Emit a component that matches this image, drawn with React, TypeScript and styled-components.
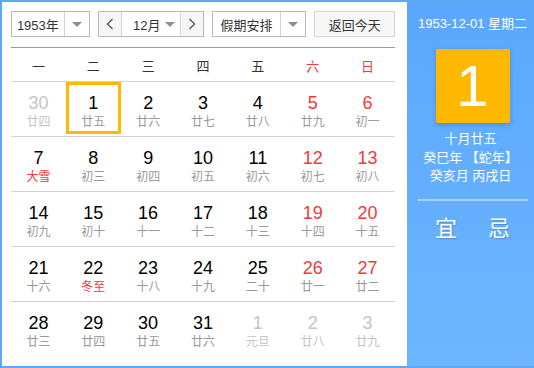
import React from 'react'
import styled, { createGlobalStyle } from 'styled-components'

const GlobalStyle = createGlobalStyle`
  body {
    margin: 0;
    background: #fff;
    font-family: "Liberation Sans", "Noto Sans CJK SC", sans-serif;
  }
`

const CalendarStyled = styled.div`
  display: flex;
  width: 534px;
  height: 368px;
  box-sizing: border-box;
  border: 2px solid #5fa8f6;
  border-right: none;
  background: #fff;
`

const MainStyled = styled.div`
  width: 384px;
  padding: 9px 12px 0 9px;
`

const ToolbarStyled = styled.div`
  display: flex;
  align-items: center;
  height: 26px;
  padding-bottom: 10px;
  border-bottom: 1px solid #5fa8f6;
`

const SelectStyled = styled.div<{ $width: number }>`
  display: flex;
  width: ${p => p.$width}px;
  height: 26px;
  box-sizing: border-box;
  border: 1px solid #b8b8b8;
  background: #fff;
  font-size: 13px;
  color: #333;
  margin-right: 8px;
`

const SelectTextStyled = styled.div`
  flex: 1;
  display: flex;
  align-items: center;
  justify-content: center;
`

const ArrowBoxStyled = styled.div<{ $divider?: boolean }>`
  width: 24px;
  display: flex;
  align-items: center;
  justify-content: center;
  border-left: ${p => (p.$divider ? '1px solid #d6d6d6' : 'none')};
  &::after {
    content: '';
    border-left: 5px solid transparent;
    border-right: 5px solid transparent;
    border-top: 5px solid #8e8e8e;
  }
`

const NavBtnStyled = styled.div`
  width: 22px;
  display: flex;
  align-items: center;
  justify-content: center;
  background: #f6f6f6;
  color: #555;
`

const MonthTextStyled = styled.div`
  flex: 1;
  display: flex;
  align-items: center;
  justify-content: center;
  padding-left: 6px;
  border-left: 1px solid #d6d6d6;
  border-right: 1px solid #d6d6d6;
  gap: 4px;
  &::after {
    content: '';
    border-left: 5px solid transparent;
    border-right: 5px solid transparent;
    border-top: 5px solid #8e8e8e;
  }
`

const TodayBtnStyled = styled.div`
  margin-left: auto;
  width: 82px;
  height: 26px;
  box-sizing: border-box;
  border: 1px solid #d4d4d4;
  background: #f7f7f7;
  display: flex;
  align-items: center;
  justify-content: center;
  font-size: 13px;
  color: #333;
`

const WeekHeadStyled = styled.div`
  display: grid;
  grid-template-columns: repeat(7, 1fr);
  height: 33px;
  align-items: center;
  padding-top: 2px;
  box-sizing: border-box;
`

const WeekdayStyled = styled.div<{ $weekend: boolean }>`
  text-align: center;
  font-size: 13px;
  color: ${p => (p.$weekend ? '#f03a3a' : '#333')};
`

const RowStyled = styled.div`
  display: grid;
  grid-template-columns: repeat(7, 1fr);
  border-top: 1px solid #d3d3d3;
  height: 54px;
`

const CellStyled = styled.div<{ $selected: boolean }>`
  display: flex;
  flex-direction: column;
  align-items: center;
  height: 52px;
  box-sizing: border-box;
  padding-top: ${p => (p.$selected ? '8px' : '11px')};
  border: ${p => (p.$selected ? '3px solid #ffb800' : 'none')};
`

const DayNumStyled = styled.div<{ $tone: string }>`
  font-size: 18px;
  line-height: 20px;
  color: ${p => p.$tone};
`

const LunarStyled = styled.div<{ $tone: string }>`
  margin-top: 1px;
  font-size: 12px;
  line-height: 17px;
  color: ${p => p.$tone};
`

const SideStyled = styled.div`
  flex: 1;
  background: linear-gradient(#5aa7fd, #6db6ff);
  display: flex;
  flex-direction: column;
  align-items: center;
  color: #fff;
  padding-top: 14px;
`

const SideDateStyled = styled.div`
  font-size: 13px;
  line-height: 16px;
  margin-left: 4px;
`

const BigDayStyled = styled.div`
  margin: 17px 0 0 4px;
  width: 74px;
  height: 74px;
  background: #ffb800;
  border-radius: 2px;
  box-shadow: 0 2px 4px rgba(40, 90, 160, 0.35);
  display: flex;
  align-items: center;
  justify-content: center;
  font-size: 58px;
  line-height: 1;
`

const LunarInfoStyled = styled.div`
  margin-top: 7px;
  font-size: 13px;
  line-height: 18.5px;
  text-align: center;
`

const SideDividerStyled = styled.div`
  width: 110px;
  height: 2px;
  margin-top: 13px;
  margin-left: 4px;
  background: rgba(255, 255, 255, 0.45);
`

const YiJiStyled = styled.div`
  display: flex;
  gap: 31px;
  margin: 9px 0 0 4px;
  font-size: 22px;
  text-shadow: 1px 1px 1px rgba(30, 70, 140, 0.35);
`

const weekdays = ['一', '二', '三', '四', '五', '六', '日']

type Day = { n: number; l: string; other?: boolean; fest?: boolean; sel?: boolean }

const rows: Day[][] = [
  [
    { n: 30, l: '廿四', other: true },
    { n: 1, l: '廿五', sel: true },
    { n: 2, l: '廿六' },
    { n: 3, l: '廿七' },
    { n: 4, l: '廿八' },
    { n: 5, l: '廿九' },
    { n: 6, l: '初一' },
  ],
  [
    { n: 7, l: '大雪', fest: true },
    { n: 8, l: '初三' },
    { n: 9, l: '初四' },
    { n: 10, l: '初五' },
    { n: 11, l: '初六' },
    { n: 12, l: '初七' },
    { n: 13, l: '初八' },
  ],
  [
    { n: 14, l: '初九' },
    { n: 15, l: '初十' },
    { n: 16, l: '十一' },
    { n: 17, l: '十二' },
    { n: 18, l: '十三' },
    { n: 19, l: '十四' },
    { n: 20, l: '十五' },
  ],
  [
    { n: 21, l: '十六' },
    { n: 22, l: '冬至', fest: true },
    { n: 23, l: '十八' },
    { n: 24, l: '十九' },
    { n: 25, l: '二十' },
    { n: 26, l: '廿一' },
    { n: 27, l: '廿二' },
  ],
  [
    { n: 28, l: '廿三' },
    { n: 29, l: '廿四' },
    { n: 30, l: '廿五' },
    { n: 31, l: '廿六' },
    { n: 1, l: '元旦', other: true },
    { n: 2, l: '廿八', other: true },
    { n: 3, l: '廿九', other: true },
  ],
]

const numTone = (d: Day, col: number): string => {
  if (d.other) return '#c4c4c4'
  if (col >= 5) return '#f03a3a'
  return '#000'
}

const lunarTone = (d: Day): string => {
  if (d.other) return '#c4c4c4'
  if (d.fest) return '#f03a3a'
  return '#999'
}

const App = () => (
  <>
    <GlobalStyle />
    <CalendarStyled>
      <MainStyled>
        <ToolbarStyled>
          <SelectStyled $width={80}>
            <SelectTextStyled>1953年</SelectTextStyled>
            <ArrowBoxStyled $divider />
          </SelectStyled>
          <SelectStyled $width={108}>
            <NavBtnStyled>
              <svg width='8' height='12' viewBox='0 0 8 12'>
                <path d='M6.5 1 L1.5 6 L6.5 11' fill='none' stroke='#555' strokeWidth='1.3' />
              </svg>
            </NavBtnStyled>
            <MonthTextStyled>12月</MonthTextStyled>
            <NavBtnStyled>
              <svg width='8' height='12' viewBox='0 0 8 12'>
                <path d='M1.5 1 L6.5 6 L1.5 11' fill='none' stroke='#555' strokeWidth='1.3' />
              </svg>
            </NavBtnStyled>
          </SelectStyled>
          <SelectStyled $width={96}>
            <SelectTextStyled>假期安排</SelectTextStyled>
            <ArrowBoxStyled $divider />
          </SelectStyled>
          <TodayBtnStyled>返回今天</TodayBtnStyled>
        </ToolbarStyled>

        <WeekHeadStyled>
          {weekdays.map((w, i) => (
            <WeekdayStyled key={w} $weekend={i >= 5}>{w}</WeekdayStyled>
          ))}
        </WeekHeadStyled>

        {rows.map((row, r) => (
          <RowStyled key={r}>
            {row.map((d, c) => (
              <CellStyled key={c} $selected={!!d.sel}>
                <DayNumStyled $tone={numTone(d, c)}>{d.n}</DayNumStyled>
                <LunarStyled $tone={lunarTone(d)}>{d.l}</LunarStyled>
              </CellStyled>
            ))}
          </RowStyled>
        ))}
      </MainStyled>

      <SideStyled>
        <SideDateStyled>1953-12-01 星期二</SideDateStyled>
        <BigDayStyled>1</BigDayStyled>
        <LunarInfoStyled>
          <div>十月廿五</div>
          <div>癸巳年 【蛇年】</div>
          <div>癸亥月 丙戌日</div>
        </LunarInfoStyled>
        <SideDividerStyled />
        <YiJiStyled>
          <span>宜</span>
          <span>忌</span>
        </YiJiStyled>
      </SideStyled>
    </CalendarStyled>
  </>
)

export default App
